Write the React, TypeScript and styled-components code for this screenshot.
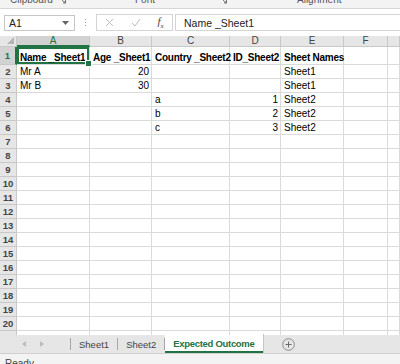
import styled, { createGlobalStyle } from "styled-components";

const GREEN = "#217346";
const LINE = "#dadada";

const GlobalStyle = createGlobalStyle`
  html, body {
    margin: 0;
    padding: 0;
    background: #fff;
    font-family: "Liberation Sans", Arial, sans-serif;
  }
`;

const Window = styled.div`
  width: 400px;
  height: 364px;
  display: flex;
  flex-direction: column;
  overflow: hidden;
  background: #fff;
`;

const RibbonStrip = styled.div`
  height: 8px;
  background: #f3f3f3;
  border-bottom: 1px solid #d6d6d6;
  position: relative;
  overflow: hidden;
  flex-shrink: 0;
`;

const GroupLabel = styled.span<{ left: number }>`
  position: absolute;
  left: ${(p) => p.left}px;
  top: -6px;
  font-size: 10px;
  color: #555;
`;

const Launcher = styled.svg<{ left: number }>`
  position: absolute;
  left: ${(p) => p.left}px;
  top: -3px;
`;

const FormulaRow = styled.div`
  height: 27px;
  display: flex;
  align-items: center;
  padding-left: 4px;
  background: #fff;
  flex-shrink: 0;
`;

const NameBox = styled.div`
  width: 71px;
  height: 16px;
  border: 1px solid #c6c6c6;
  box-sizing: border-box;
  display: flex;
  align-items: center;
  justify-content: space-between;
  padding: 0 5px 0 4px;
  font-size: 10.5px;
  color: #222;
`;

const Grip = styled.div`
  width: 21px;
  display: flex;
  flex-direction: column;
  align-items: center;
  gap: 2px;
  & span {
    width: 1px;
    height: 1px;
    background: #9a9a9a;
  }
`;

const FxBox = styled.div`
  width: 77px;
  height: 17px;
  border: 1px solid #d4d4d4;
  box-sizing: border-box;
  display: flex;
  align-items: center;
  justify-content: space-around;
  margin-right: 2px;
`;

const FxText = styled.span`
  font-family: "Liberation Serif", serif;
  font-style: italic;
  font-size: 11px;
  color: #444;
`;

const Input = styled.div`
  flex: 1;
  height: 17px;
  border: 1px solid #d4d4d4;
  border-right: none;
  box-sizing: border-box;
  display: flex;
  align-items: center;
  padding-left: 8px;
  font-size: 10.5px;
  color: #222;
`;

const Sheet = styled.div`
  height: 299px;
  overflow: hidden;
  display: grid;
  grid-template-columns: 17px 73px 62px 78px 51px 63px 44px 12px;
  grid-template-rows: 11px 18px repeat(20, 14px);
  flex-shrink: 0;
`;

const Corner = styled.div`
  background: #e6e6e6;
  border-right: 1px solid #c8c8c8;
  border-bottom: 1px solid #c8c8c8;
  box-sizing: border-box;
  display: flex;
  align-items: flex-end;
  justify-content: flex-end;
  padding: 0 2px 2px 0;
`;

const ColHead = styled.div<{ active?: boolean }>`
  background: ${(p) => (p.active ? "#d2d2d2" : "#e6e6e6")};
  color: ${(p) => (p.active ? GREEN : "#444")};
  border-right: 1px solid #c8c8c8;
  border-bottom: ${(p) => (p.active ? `2px solid ${GREEN}` : "1px solid #c8c8c8")};
  box-sizing: border-box;
  font-size: 10px;
  line-height: 10px;
  text-align: center;
`;

const RowHead = styled.div<{ active?: boolean }>`
  background: ${(p) => (p.active ? "#d2d2d2" : "#e6e6e6")};
  color: ${(p) => (p.active ? GREEN : "#444")};
  border-right: ${(p) => (p.active ? `2px solid ${GREEN}` : "1px solid #c8c8c8")};
  border-bottom: 1px solid #c8c8c8;
  box-sizing: border-box;
  font-size: 9.5px;
  font-weight: bold;
  display: flex;
  align-items: center;
  justify-content: center;
`;

const Cell = styled.div<{ bold?: boolean; num?: boolean; selected?: boolean }>`
  position: relative;
  border-right: 1px solid ${LINE};
  border-bottom: 1px solid ${LINE};
  box-sizing: border-box;
  font-size: 10px;
  font-weight: ${(p) => (p.bold ? "bold" : "normal")};
  letter-spacing: ${(p) => (p.bold ? "-0.25px" : "0")};
  color: #000;
  white-space: nowrap;
  overflow: visible;
  display: flex;
  align-items: flex-end;
  justify-content: ${(p) => (p.num ? "flex-end" : "flex-start")};
  padding: 0 2px 1px 3px;
  z-index: ${(p) => (p.selected ? 2 : 1)};
  ${(p) =>
    p.selected &&
    `
    box-shadow: inset 0 0 0 2px ${GREEN};
    &::after {
      content: "";
      position: absolute;
      right: -3px;
      bottom: -3px;
      width: 5px;
      height: 5px;
      background: ${GREEN};
      border: 1px solid #fff;
    }
  `}
`;

const TabBar = styled.div`
  height: 18px;
  background: #e6e6e6;
  display: flex;
  align-items: stretch;
  border-bottom: 1px solid #d0d0d0;
  flex-shrink: 0;
`;

const Nav = styled.div`
  width: 70px;
  display: flex;
  align-items: center;
  justify-content: center;
  gap: 14px;
  padding-right: 4px;
  box-sizing: border-box;
`;

const Sep = styled.div`
  width: 1px;
  background: #a6a6a6;
  margin: 3px 0;
`;

const Tab = styled.div<{ active?: boolean }>`
  padding: 0 8px;
  display: flex;
  align-items: center;
  font-size: 9.5px;
  color: ${(p) => (p.active ? GREEN : "#444")};
  font-weight: ${(p) => (p.active ? "bold" : "normal")};
  letter-spacing: ${(p) => (p.active ? "-0.3px" : "0")};
  background: ${(p) => (p.active ? "#fff" : "transparent")};
  ${(p) =>
    p.active &&
    `
    margin-top: -1px;
    border-bottom: 2px solid ${GREEN};
    padding-top: 1px;
    box-shadow: 1px 0 0 #c6c6c6;
  `}
`;

const AddTab = styled.div`
  display: flex;
  align-items: center;
  padding-left: 19px;
`;

const StatusBar = styled.div`
  flex: 1;
  background: #f3f3f3;
  font-size: 10px;
  color: #444;
  padding: 4px 0 0 5px;
`;

type Row = { cells: (string | number)[]; bold?: boolean };

const rows: Row[] = [
  { cells: ["Name _Sheet1", "Age _Sheet1", "Country _Sheet2", "ID_Sheet2", "Sheet Names", ""], bold: true },
  { cells: ["Mr A", 20, "", "", "Sheet1", ""] },
  { cells: ["Mr B", 30, "", "", "Sheet1", ""] },
  { cells: ["", "", "a", 1, "Sheet2", ""] },
  { cells: ["", "", "b", 2, "Sheet2", ""] },
  { cells: ["", "", "c", 3, "Sheet2", ""] },
];

const cols = ["A", "B", "C", "D", "E", "F", ""];

function LauncherIcon({ left }: { left: number }) {
  return (
    <Launcher left={left} width="8" height="8" viewBox="0 0 8 8">
      <path d="M0.5 0.5h6v6" fill="none" stroke="#777" />
      <path d="M2 2l4 4M4 6h2V4" fill="none" stroke="#777" />
    </Launcher>
  );
}

function App() {
  const grid = [];
  for (let r = 0; r < 21; r++) {
    const row = rows[r];
    grid.push(
      <RowHead key={`h${r}`} active={r === 0}>
        {r + 1}
      </RowHead>
    );
    for (let c = 0; c < 7; c++) {
      const v = row && c < 6 ? row.cells[c] : "";
      grid.push(
        <Cell
          key={`${r}-${c}`}
          bold={row?.bold}
          num={typeof v === "number"}
          selected={r === 0 && c === 0}
        >
          {v}
        </Cell>
      );
    }
  }

  return (
    <>
      <GlobalStyle />
      <Window>
        <RibbonStrip>
          <GroupLabel left={10}>Clipboard</GroupLabel>
          <LauncherIcon left={59} />
          <GroupLabel left={135}>Font</GroupLabel>
          <LauncherIcon left={220} />
          <GroupLabel left={297}>Alignment</GroupLabel>
        </RibbonStrip>
        <FormulaRow>
          <NameBox>
            A1
            <svg width="7" height="4" viewBox="0 0 7 4">
              <path d="M0 0h7L3.5 4z" fill="#666" />
            </svg>
          </NameBox>
          <Grip>
            <span />
            <span />
            <span />
          </Grip>
          <FxBox>
            <svg width="9" height="9" viewBox="0 0 9 9">
              <path d="M1 1l7 7M8 1L1 8" stroke="#bdbdbd" strokeWidth="1" />
            </svg>
            <svg width="10" height="9" viewBox="0 0 10 9">
              <path d="M1 5l3 3 5-7" fill="none" stroke="#bdbdbd" strokeWidth="1" />
            </svg>
            <FxText>
              f<sub style={{ fontSize: 7 }}>x</sub>
            </FxText>
          </FxBox>
          <Input>Name _Sheet1</Input>
        </FormulaRow>
        <Sheet>
          <Corner>
            <svg width="7" height="7" viewBox="0 0 7 7">
              <path d="M7 0v7H0z" fill="#b4b4b4" />
            </svg>
          </Corner>
          {cols.map((c, i) => (
            <ColHead key={i} active={i === 0}>
              {c}
            </ColHead>
          ))}
          {grid}
        </Sheet>
        <TabBar>
          <Nav>
            <svg width="4" height="6" viewBox="0 0 4 6">
              <path d="M4 0v6L0 3z" fill="#bcbcbc" />
            </svg>
            <svg width="4" height="6" viewBox="0 0 4 6">
              <path d="M0 0v6l4-3z" fill="#bcbcbc" />
            </svg>
          </Nav>
          <Sep />
          <Tab>Sheet1</Tab>
          <Sep />
          <Tab>Sheet2</Tab>
          <Sep />
          <Tab active>Expected Outcome</Tab>
          <AddTab>
            <svg width="13" height="13" viewBox="0 0 13 13">
              <circle cx="6.5" cy="6.5" r="5.8" fill="none" stroke="#8a8a8a" />
              <path d="M6.5 3.5v6M3.5 6.5h6" stroke="#6a6a6a" />
            </svg>
          </AddTab>
        </TabBar>
        <StatusBar>Ready</StatusBar>
      </Window>
    </>
  );
}

export default App;
